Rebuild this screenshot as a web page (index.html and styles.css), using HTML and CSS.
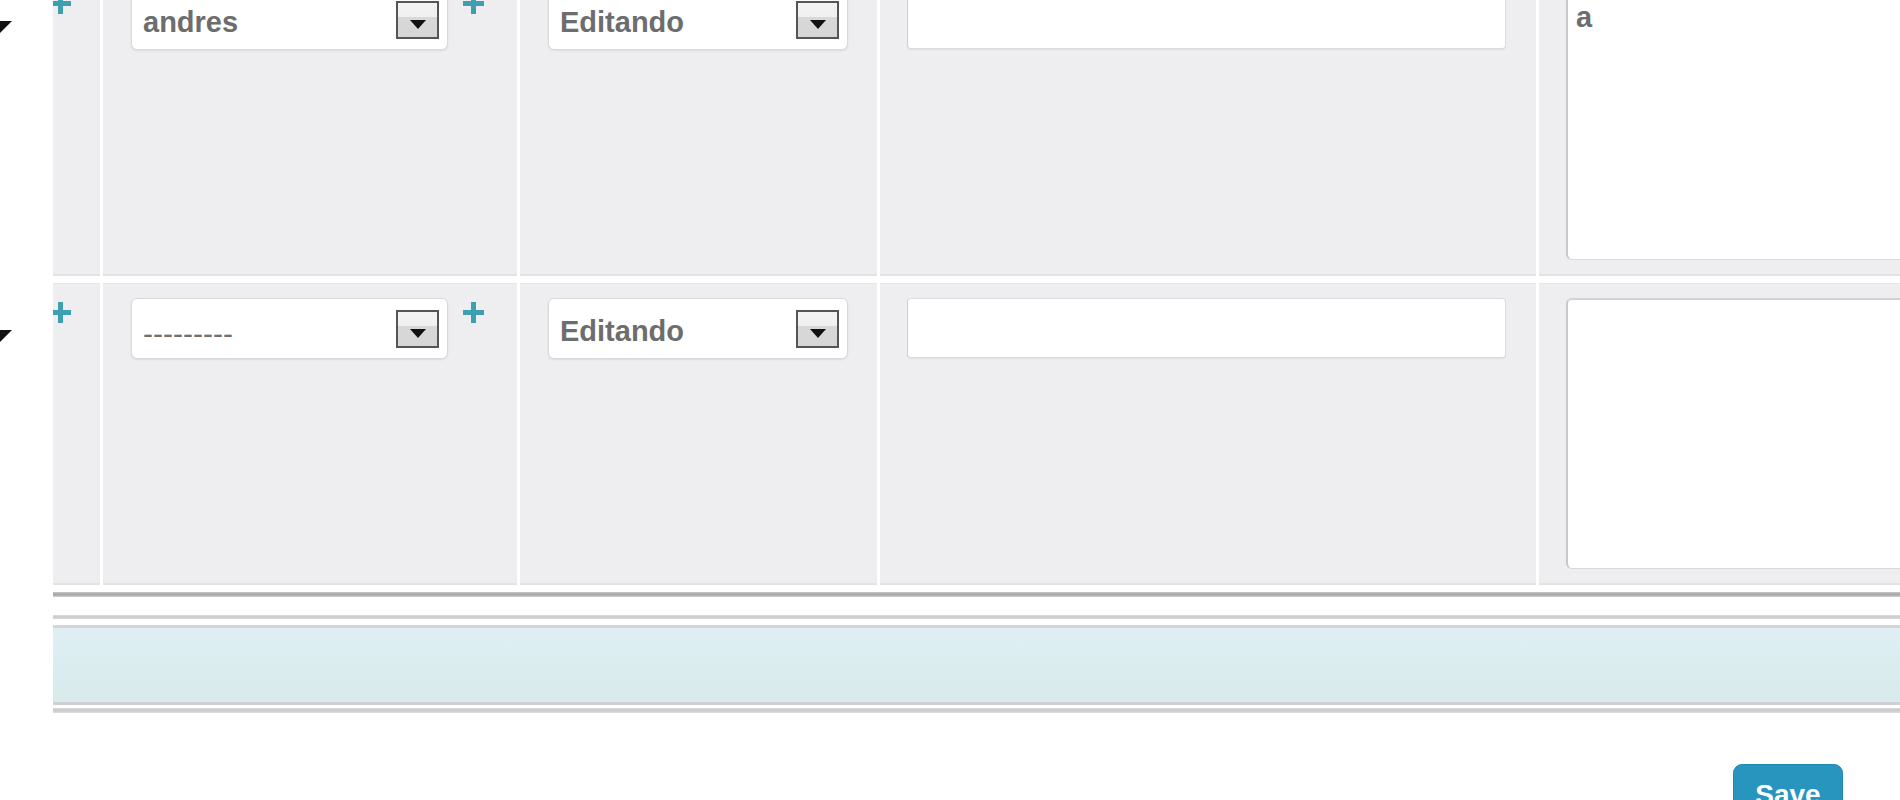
FILE: index.html
```html
<!DOCTYPE html>
<html lang="es">
<head>
<meta charset="utf-8">
<title>Formulario</title>
<link rel="stylesheet" href="styles.css">
</head>
<body>
<div class="page">
  <div class="rows">
    <div class="row first">
      <div class="gutter">
        <svg class="sort-arrow" width="24" height="12" viewBox="0 0 24 12"><polygon points="0,0 24,0 12,12" fill="#111"/></svg>
      </div>
      <div class="cell c1">
        <svg class="plus" width="21" height="21" viewBox="0 0 21 21"><rect x="0" y="8" width="21" height="5" fill="#3d9fb0"/><rect x="8" y="0" width="5" height="21" fill="#3d9fb0"/></svg>
      </div>
      <div class="cell c2">
        <div class="select">
          <span class="select-value">andres</span>
          <span class="dropbtn"><span class="caret"></span></span>
        </div>
        <svg class="plus" width="21" height="21" viewBox="0 0 21 21"><rect x="0" y="8" width="21" height="5" fill="#3d9fb0"/><rect x="8" y="0" width="5" height="21" fill="#3d9fb0"/></svg>
      </div>
      <div class="cell c3">
        <div class="select narrow">
          <span class="select-value">Editando</span>
          <span class="dropbtn"><span class="caret"></span></span>
        </div>
      </div>
      <div class="cell c4">
        <div class="textbox"></div>
      </div>
      <div class="cell c5">
        <div class="textarea">a</div>
      </div>
    </div>
    <div class="row">
      <div class="gutter">
        <svg class="sort-arrow" width="24" height="12" viewBox="0 0 24 12"><polygon points="0,0 24,0 12,12" fill="#111"/></svg>
      </div>
      <div class="cell c1">
        <svg class="plus" width="21" height="21" viewBox="0 0 21 21"><rect x="0" y="8" width="21" height="5" fill="#3d9fb0"/><rect x="8" y="0" width="5" height="21" fill="#3d9fb0"/></svg>
      </div>
      <div class="cell c2">
        <div class="select">
          <span class="select-value empty">---------</span>
          <span class="dropbtn"><span class="caret"></span></span>
        </div>
        <svg class="plus" width="21" height="21" viewBox="0 0 21 21"><rect x="0" y="8" width="21" height="5" fill="#3d9fb0"/><rect x="8" y="0" width="5" height="21" fill="#3d9fb0"/></svg>
      </div>
      <div class="cell c3">
        <div class="select narrow">
          <span class="select-value">Editando</span>
          <span class="dropbtn"><span class="caret"></span></span>
        </div>
      </div>
      <div class="cell c4">
        <div class="textbox"></div>
      </div>
      <div class="cell c5">
        <div class="textarea"></div>
      </div>
    </div>
  </div>
  <div class="footer">
    <div class="rule-thick"></div>
    <div class="rule-thin"></div>
    <div class="band"></div>
    <div class="rule-bottom"></div>
    <div class="actions">
      <span class="save">Save</span>
    </div>
  </div>
</div>
</body>
</html>
```

FILE: styles.css
```css
html, body {
  margin: 0;
  padding: 0;
  overflow: hidden;
  background: #ffffff;
}

body {
  width: 1900px;
  height: 800px;
  font-family: "Liberation Sans", Arial, sans-serif;
  color: #6d6d6d;
}

.page {
  margin-top: -26px;
}

.rows {
  display: flex;
  flex-direction: column;
  gap: 7px;
}

.row {
  display: flex;
  gap: 3px;
  height: 302px;
}

.gutter {
  width: 50px;
  flex: none;
}

.sort-arrow {
  display: block;
  margin-left: -12px;
  margin-top: 47px;
}

.cell {
  flex: none;
  box-sizing: border-box;
  background: #eeedf0;
  box-shadow: inset 0 -2px 0 #e2e1e4, inset 0 1px 0 #e7e6e9;
  padding-top: 15px;
  overflow: hidden;
}

.c1 {
  width: 47px;
  padding-top: 19px;
}

.c1 .plus {
  margin-left: -3px;
}

.plus {
  display: block;
  flex: none;
}

.c2 {
  width: 414px;
  padding-left: 28px;
  display: flex;
  align-items: flex-start;
  gap: 15px;
}

.c2 .plus {
  margin-top: 4px;
}

.c3 {
  width: 357px;
  padding-left: 28px;
}

.c4 {
  width: 656px;
  padding-left: 27px;
}

.c5 {
  flex: 1;
  min-width: 0;
  padding-left: 27px;
}

.select {
  width: 317px;
  height: 61px;
  box-sizing: border-box;
  background: #ffffff;
  border: 1px solid #d8d8db;
  border-radius: 6px;
  box-shadow: 0 1px 2px rgba(0, 0, 0, 0.08);
  display: flex;
  align-items: center;
  justify-content: space-between;
  padding: 0 8px 0 11px;
}

.select.narrow {
  width: 300px;
}

.select-value {
  font-weight: bold;
  font-size: 29px;
  color: #6d6d6d;
  padding-top: 6px;
}

.select-value.empty {
  font-weight: normal;
  font-size: 30px;
  color: #6f6f6f;
  padding-top: 10px;
}

.dropbtn {
  width: 43px;
  height: 38px;
  box-sizing: border-box;
  border: 2px solid #555555;
  background: linear-gradient(#f3f3f3 0, #f0f0f0 40%, #d8d8d8 40%, #d6d6d6 100%);
  display: flex;
  justify-content: center;
  align-items: center;
  padding-top: 10px;
}

.caret {
  width: 0;
  height: 0;
  border-left: 8px solid transparent;
  border-right: 8px solid transparent;
  border-top: 9px solid #111111;
}

.textbox {
  width: 599px;
  height: 60px;
  box-sizing: border-box;
  background: #ffffff;
  border: 1px solid #dcdcdf;
  border-left-color: #cfcfd2;
  border-radius: 4px;
  box-shadow: 0 1px 1px rgba(0, 0, 0, 0.06);
}

.textarea {
  width: 420px;
  height: 271px;
  box-sizing: border-box;
  background: #ffffff;
  border: 1px solid #d8d8db;
  border-left: 2px solid #c8c8cb;
  border-top: 2px solid #d2d2d5;
  border-radius: 6px 0 0 6px;
  padding: 10px 8px;
  font-weight: bold;
  font-size: 29px;
  color: #6d6d6d;
}

.footer {
  margin-left: 53px;
  padding-top: 7px;
}

.rule-thick {
  height: 5px;
  background: linear-gradient(#cacacc, #a8a8aa 40%, #adadaf 65%, #d6d6d8);
}

.rule-thin {
  height: 4px;
  margin-top: 18px;
  background: linear-gradient(#dcdcde, #c9c9cb 50%, #dcdcde);
}

.band {
  height: 80px;
  margin-top: 6px;
  box-sizing: border-box;
  border-top: 3px solid #d2d6d8;
  border-bottom: 3px solid #ccd1d3;
  background: linear-gradient(#dfeff4, #d8eaeb);
}

.rule-bottom {
  height: 5px;
  margin-top: 3px;
  background: linear-gradient(#d9d9db, #c9c9cb 50%, #dfdfe1);
}

.actions {
  display: flex;
  justify-content: flex-end;
  padding-right: 57px;
  margin-top: 51px;
}

.save {
  width: 110px;
  box-sizing: border-box;
  padding: 14px 0;
  text-align: center;
  background: #2895bf;
  border: 1px solid #2388ae;
  border-radius: 9px;
  color: #ffffff;
  font-weight: bold;
  font-size: 28px;
}
```
